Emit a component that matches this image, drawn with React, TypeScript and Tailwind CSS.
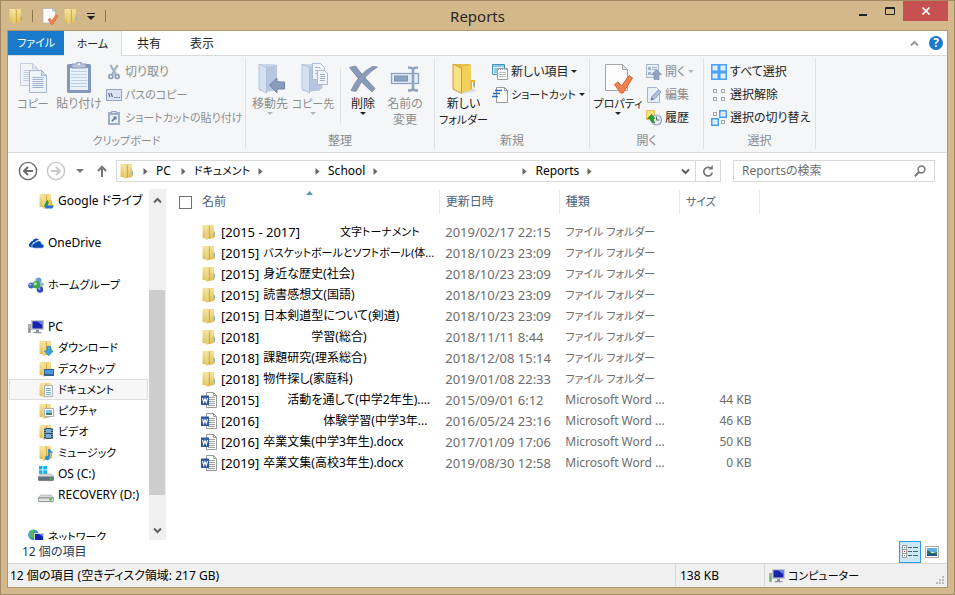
import type { ReactNode } from "react";

type Kids = { children?: ReactNode };

function textSize(text: string) {
  const kana = (text.match(/[\u30a1-\u30fc]/g) ?? []).length;
  return kana > text.length / 2 ? "text-[11px]" : "text-[12px]";
}

/* ---------- icons ---------- */

function Folder({ children }: Kids) {
  return (
    <svg width="16" height="16" viewBox="0 0 16 16" className="shrink-0" aria-hidden="true">
      <defs>
        <linearGradient id="fl" x1="0" y1="0" x2="0" y2="1">
          <stop offset="0" stopColor="#f6e59c" />
          <stop offset="1" stopColor="#dfc058" />
        </linearGradient>
        <linearGradient id="fr" x1="0" y1="0" x2="1" y2="1">
          <stop offset="0" stopColor="#f9ecb0" />
          <stop offset="1" stopColor="#dcb74a" />
        </linearGradient>
      </defs>
      <path d="M1.500 1H7v13.500l-5.500-.5z" fill="url(#fl)" />
      <path d="M6.500 1.500 8 1h4.800v13H7z" fill="#ecd27a" />
      <path d="M4.800 2.500 8.500 1.500 9 14.600 5.600 15.800 4.800 15z" fill="url(#fr)" />
      <path d="M9 1.800 12.800 1.200V14L8.600 15z" fill="url(#fl)" />
      <path d="M8.500 2v12.800" stroke="#c9a23c" strokeWidth=".7" />
      <path d="M12.300 7.500h1.500v5.500l-1.500 1z" fill="#cdb563" />
      <path d="M13 9h.8v2.500H13z" fill="#58b4ea" />
      {children}
    </svg>
  );
}

function WordIcon() {
  return (
    <svg width="16" height="16" viewBox="0 0 16 16" className="shrink-0" aria-hidden="true">
      <path d="M5.500.500h7l3 3v12h-10z" fill="#fff" stroke="#9a9a9a" />
      <path d="M12.500.500v3h3" fill="none" stroke="#9a9a9a" />
      <path d="M8 5.500h6M8 7.500h6M8 9.500h6M8 11.500h6M7 13.500h7" stroke="#a2a2a2" />
      <path d="M0 3.500h8v9.500H0z" fill="#2b579a" />
      <path d="m1.500 6 1.200 4.300L4 6.600l1.300 3.700L6.500 6" fill="none" stroke="#fff" strokeWidth="1.100" />
    </svg>
  );
}

function PcIcon() {
  return (
    <svg width="16" height="16" viewBox="0 0 16 16" className="shrink-0" aria-hidden="true">
      <path d="M0 5h3v9H0z" fill="#a9adb0" />
      <path d="M1 9h1v4H1z" fill="#55b04e" />
      <path d="M3 1h13v10H3z" fill="#c3c8cc" />
      <path d="M4.500 2.300h10v7.200h-10z" fill="#1823ae" />
      <path d="M9 2.300h5.500v4z" fill="#6f86ee" />
      <path d="M8 11h3v2h2.500v1.300h-8V13H8z" fill="#8f9498" />
    </svg>
  );
}

function DriveIcon({ system = false }: { system?: boolean }) {
  return (
    <svg width="16" height="16" viewBox="0 0 16 16" className="shrink-0" aria-hidden="true">
      {system && <path d="M1 0h3.500v3.500H1zM5.300 0H9v3.500H5.300zM1 4.300h3.500V8H1zM5.300 4.300H9V8H5.300z" fill="#14b4ee" />}
      <path d="M2.500 8h11l2.200 3H.300z" fill="#d6d9db" stroke="#a6aaad" strokeWidth=".6" />
      <path d="M.300 11h15.400v2.600q0 1-1 1H1.300q-1 0-1-1z" fill={system ? "#5d6f80" : "#e4e6e7"} stroke="#6c7175" strokeWidth=".8" />
      <path d="M11.500 11.500h2.300v2.100h-2.300z" fill="#41c23c" />
    </svg>
  );
}

function GoogleFolder() {
  return (
    <Folder>
      <path d="m9.300 7 2.700 0 3.700 6h-2.900z" fill="#f8c520" />
      <path d="m9.300 7 1.500 2.500L8.300 15 6 13z" fill="#149b58" />
      <path d="M8.300 12.500h7.500l-1.400 3H7z" fill="#2b6ee0" />
    </Folder>
  );
}

function OneDriveIcon() {
  return (
    <svg width="16" height="16" viewBox="0 0 17 16" className="shrink-0" aria-hidden="true">
      <path d="M4.500 12.500H2.600A2.400 2.400 0 0 1 2.400 8 3 3 0 0 1 5 5.500 4 4 0 0 1 12 5q-3-.5-4.500 2-3.700 0-3 5.500z" fill="#094ab2" />
      <path d="M6.500 13.500a2.400 2.400 0 0 1-.2-4.900q.8-2 2.700-1.800A3.100 3.100 0 0 1 14.500 9a2.200 2.200 0 0 1 .4 4.500z" fill="#094ab2" stroke="#fff" strokeWidth=".6" />
    </svg>
  );
}

function HomegroupIcon() {
  return (
    <svg width="16" height="16" viewBox="0 0 16 16" className="shrink-0" aria-hidden="true">
      <circle cx="10.500" cy="3.500" r="3" fill="#6e9fd6" />
      <circle cx="3.200" cy="8.500" r="3" fill="#3f63c4" />
      <circle cx="12" cy="12.500" r="3.200" fill="#3050b8" />
      <circle cx="13.500" cy="7.500" r="2.200" fill="#8eb8e4" />
      <circle cx="8.300" cy="7.800" r="3.800" fill="#3fa548" />
      <circle cx="7.400" cy="6.700" r="1.500" fill="#b5e5ac" />
      <circle cx="2.300" cy="7.500" r="1" fill="#b8cdf4" />
      <circle cx="11.200" cy="11.700" r="1.100" fill="#9db9f2" />
    </svg>
  );
}

function NetworkIcon() {
  return (
    <svg width="16" height="16" viewBox="0 0 16 16" className="shrink-0" aria-hidden="true">
      <circle cx="5.500" cy="5.800" r="5.300" fill="#2d8fd8" />
      <path d="M1 4q3-4 6-3L5 4l1 3-2 3-3-3z" fill="#58b956" />
      <path d="M6 4h10v8H6z" fill="#cfd6dc" />
      <path d="M7 5h8v6H7z" fill="#1522a8" />
      <path d="M11 5h4v3z" fill="#6c82ea" />
      <path d="M9 12h4v2H9z" fill="#8d9296" />
    </svg>
  );
}

function Sheet({ x, y }: { x: number; y: number }) {
  return (
    <g transform={`translate(${x} ${y})`}>
      <path d="M.500.500h12l5 5v17H.500z" fill="#eff4fb" stroke="#a3b5d2" />
      <path d="M12.500.500v5h5z" fill="#d5e0f0" stroke="#a3b5d2" />
      <path d="M3.500 7.500h11M3.500 9.500h11M3.500 11.500h11M3.500 13.500h11M3.500 15.500h11M3.500 17.500h11" stroke="#9db1d2" />
    </g>
  );
}

function CopyIcon() {
  return (
    <svg width="32" height="32" viewBox="0 0 32 32" aria-hidden="true">
      <g opacity=".6"><Sheet x={3} y={1} /></g>
      <Sheet x={12} y={8} />
    </svg>
  );
}

function PasteIcon() {
  return (
    <svg width="32" height="32" viewBox="0 0 32 32" aria-hidden="true">
      <rect x="4" y="2" width="24" height="29" rx="1.500" fill="#8398ba" />
      <path d="M7 6h18v22H7z" fill="#e9f1fa" />
      <path d="M8 9.500h16M8 12.500h16M8 15.500h16M8 18.500h16M8 21.500h16M8 24.500h16" stroke="#bccfe6" />
      <path d="M9 2h4q0-2 3-2t3 2h4v4H9z" fill="#b7c4d8" stroke="#8a9ab4" />
      <path d="M15 1.500h2v1.500h-2z" fill="#f4f6f8" />
    </svg>
  );
}

function BlueFolder({ children }: Kids) {
  return (
    <svg width="32" height="32" viewBox="0 0 32 32" aria-hidden="true">
      <path d="M5 2h14l4 1v26H5z" fill="#c9d7ea" />
      <path d="M12 5 23 3v25l-11 2z" fill="#b6c6de" />
      <path d="M5 2 12.500 5.500V31L5 27z" fill="#d5e1f1" stroke="#a8bad5" strokeWidth=".8" />
      <path d="M23 19h2.500v7L23 28z" fill="#bac9dd" />
      {children}
    </svg>
  );
}

function MoveToIcon() {
  return (
    <BlueFolder>
      <path d="m15.500 23 7.500-7v4h7.500v7H23v4z" fill="#8a9dbf" stroke="#6b82ab" />
    </BlueFolder>
  );
}

function CopyToIcon() {
  return (
    <BlueFolder>
      <path d="M15.500 1.500h8l4 4v12h-12z" fill="#f2f6fc" stroke="#a9bbd6" />
      <path d="M18 5.500h5M18 8.500h7M18 11.500h7" stroke="#9db1d2" />
      <path d="M20.500 8.500h7l3 3v11h-10z" fill="#f2f6fc" stroke="#a9bbd6" />
      <path d="M23 12.500h5M23 14.500h5M23 16.500h5M23 18.500h5" stroke="#9db1d2" />
    </BlueFolder>
  );
}

function DeleteIcon() {
  return (
    <svg width="32" height="32" viewBox="0 0 32 32" aria-hidden="true">
      <path d="M2.500 5.500 8.500 4Q15 13 28 26.500L25 30Q13 20 2.500 5.500z" fill="#8a9bb8" stroke="#7688a8" strokeWidth=".8" />
      <path d="M30.500 5Q17 13 9 29.500L4 28.500Q12 11 25.500 4.500z" fill="#8a9bb8" stroke="#7688a8" strokeWidth=".8" />
    </svg>
  );
}

function RenameIcon() {
  return (
    <svg width="32" height="32" viewBox="0 0 32 32" aria-hidden="true">
      <rect x="2.500" y="11.500" width="27" height="10" fill="#e4ecf7" stroke="#8ca2c4" strokeWidth="1.300" />
      <rect x="5.500" y="14" width="13" height="5" fill="#8ea2c3" stroke="#7b91b6" />
      <path d="M19 5.500q4 0 5 1.500 1-1.500 5-1.500M24 7v20m-5 1.500q4 0 5-1.500 1 1.500 5 1.500" fill="none" stroke="#8fa3c3" strokeWidth="2.600" />
    </svg>
  );
}

function NewFolderIcon() {
  return (
    <svg width="32" height="32" viewBox="0 0 32 32" aria-hidden="true">
      <path d="m14 29 12-2 3 2-15 3z" fill="#dadcdf" />
      <path d="M5 2h16l2 1v25H5z" fill="#e6bd44" />
      <path d="M13 5 23 3v25l-10 3z" fill="#f2d05a" />
      <path d="M5 2 13.500 6v25.500L5 27z" fill="#f9e283" stroke="#cf9c22" />
      <path d="M22.500 18H27v7l-4.500 3z" fill="#e2b43a" />
      <path d="M24 20h1.500v6L24 27z" fill="#fff" />
      <path d="M25.500 20.500h1v4h-1z" fill="#3e9de0" />
    </svg>
  );
}

function PropertiesIcon({ size = 32 }: { size?: number }) {
  return (
    <svg width={size} height={size} viewBox="0 0 32 32" aria-hidden="true" className="shrink-0">
      <path d="M3.500 2.500h17l5 5v21h-22z" fill="#fcfcfd" stroke="#a3a6aa" />
      <path d="M20.500 2.500v5h5z" fill="#e3e5e8" stroke="#a3a6aa" />
      <path d="m12.500 22.500 3.500-2.500 3.500 4L27 13.500l3.500 2.500L21 31h-2.500z" fill="#f0814f" stroke="#dd6230" />
    </svg>
  );
}

function CutIcon() {
  return (
    <svg width="16" height="16" viewBox="0 0 16 16" className="shrink-0" aria-hidden="true">
      <path d="M4.500 1 9.800 10.500M11.500 1 6.200 10.500" stroke="#a3b2c9" strokeWidth="2.200" />
      <circle cx="4.800" cy="12.500" r="2" fill="none" stroke="#8396b5" strokeWidth="1.500" />
      <circle cx="11.200" cy="12.500" r="2" fill="none" stroke="#8396b5" strokeWidth="1.500" />
    </svg>
  );
}

function CopyPathIcon() {
  return (
    <svg width="16" height="16" viewBox="0 0 16 16" className="shrink-0" aria-hidden="true">
      <rect x=".5" y="2.500" width="15" height="11" fill="#dce6f3" stroke="#8fa3c4" />
      <path d="m2.500 6 1.500 4m1-4 1.500 4M8 10.500h1.500m.8 0h1.400m.9 0H14" stroke="#596e94" strokeWidth="1.200" />
    </svg>
  );
}

function PasteShortcutIcon() {
  return (
    <svg width="16" height="16" viewBox="0 0 16 16" className="shrink-0" aria-hidden="true">
      <path d="M2 2h12v13H2z" fill="#9fb0ca" />
      <path d="M5.500 1.500h5v2h-5z" fill="#dbe3ee" stroke="#8fa1bf" />
      <path d="M4 5h8v8H4z" fill="#eef4fb" />
      <path d="M7 6.500h3.500V10L9.300 8.900 6.500 11.700 5.300 10.500 8.100 7.700z" fill="#5b739f" />
    </svg>
  );
}

function NewItemIcon() {
  return (
    <svg width="16" height="16" viewBox="0 0 16 16" className="shrink-0" aria-hidden="true">
      <path d="M.500.500h12v10H.500z" fill="#e2f2fa" stroke="#3f93bf" />
      <path d="M1 1h11v2H1z" fill="#8cc8e4" />
      <path d="M2 4h3v5H2z" fill="#94cce4" />
      <path d="M5.500 4.500h10v11h-10z" fill="#fff" stroke="#989da2" />
      <path d="M6 5.500h9" stroke="#9ea3a8" strokeDasharray="1 1" />
      <path d="M7 8.500h7M7 10.500h7M7 12.500h7" stroke="#c0c4c8" />
    </svg>
  );
}

function ShortcutIcon() {
  return (
    <svg width="16" height="16" viewBox="0 0 16 16" className="shrink-0" aria-hidden="true">
      <path d="M4.500.500h8l3 3v12h-11z" fill="#fff" stroke="#95999d" />
      <path d="M12.500.500v3h3" fill="none" stroke="#95999d" />
      <path d="M3 3.500h7M1 6.500h7M0 9.500h6" stroke="#1e6fc4" strokeWidth="1.300" />
    </svg>
  );
}

function OpenIcon() {
  return (
    <svg width="16" height="16" viewBox="0 0 16 16" className="shrink-0" aria-hidden="true">
      <path d="M.500.500h12v13H.500z" fill="#e6edf7" stroke="#a4b5d0" />
      <path d="M2 3h3v3H2zM2 8h3v3H2z" fill="#a4b5d0" />
      <path d="M6 3.500h5M6 5.500h5" stroke="#a4b5d0" />
      <path d="m10.500 5.500 5 5H13v5H8v-5H5.500z" fill="#8fa2c2" stroke="#7b90b4" strokeWidth=".7" />
    </svg>
  );
}

function EditIcon() {
  return (
    <svg width="16" height="16" viewBox="0 0 16 16" className="shrink-0" aria-hidden="true">
      <path d="M1.500.500h9l3 3v12h-12z" fill="#e9f0f9" stroke="#a4b5d0" />
      <path d="m5 13 1-3.500L12.500 3 15 5.200 8.500 12z" fill="#b4c3db" stroke="#8499bd" />
      <path d="m4.500 13.500 1.200-3.200 2 2z" fill="#637ba6" />
    </svg>
  );
}

function HistoryIcon() {
  return (
    <svg width="16" height="16" viewBox="0 0 16 16" className="shrink-0" aria-hidden="true">
      <path d="M.500.500h8v9h-8z" fill="#f8df7c" stroke="#dbb542" strokeWidth=".8" />
      <circle cx="10.500" cy="10" r="5" fill="#eef3f8" stroke="#93a3b4" strokeWidth="1.200" />
      <path d="M10.500 6.500V10h3" fill="none" stroke="#56697c" strokeWidth="1.200" />
      <path d="m1.500 8.500 4.200-4 3 4H7.200Q7 10.500 9 13 4.500 12.500 4 8.500z" fill="#24a52b" stroke="#148318" strokeWidth=".7" />
    </svg>
  );
}

const TILES = [
  [0, 0],
  [8, 0],
  [0, 8],
  [8, 8],
];

function SelectionIcon({ on }: { on: number[] }) {
  return (
    <svg width="16" height="16" viewBox="0 0 16 16" className="shrink-0" aria-hidden="true">
      {TILES.map(([x, y], i) =>
        on.includes(i) ? (
          <g key={i}>
            <rect x={x} y={y} width="8" height="8" fill="#4aa2f5" />
            <rect x={x + 2} y={y + 2} width="4" height="4" fill="#cfe8fd" stroke="#fff" strokeWidth=".8" />
          </g>
        ) : (
          <rect key={i} x={x + 2.5} y={y + 2.5} width="3" height="3" fill="#fff" stroke="#a2a5a8" />
        ),
      )}
    </svg>
  );
}

function Caret({ muted = false }: { muted?: boolean }) {
  return (
    <svg width="6" height="3" viewBox="0 0 6 3" className={`shrink-0 ${muted ? "text-[#b5b5b5]" : "text-[#222]"}`} aria-hidden="true">
      <path d="M0 0h6L3 3z" fill="currentColor" />
    </svg>
  );
}

function Chevron({ up = false, className = "text-[#606060]" }: { up?: boolean; className?: string }) {
  return (
    <svg width="9" height="7" viewBox="0 0 9 7" className={`shrink-0 ${className}`} aria-hidden="true">
      <path d={up ? "M1 5.500 4.500 2 8 5.500" : "M1 1.500 4.500 5 8 1.500"} fill="none" stroke="currentColor" strokeWidth="2" />
    </svg>
  );
}

function ArrowCircle({ back = false }: { back?: boolean }) {
  const c = back ? "#6a6a6a" : "#c8c8c8";
  return (
    <svg width="20" height="20" viewBox="0 0 20 20" aria-hidden="true">
      <circle cx="10" cy="10" r="8.600" fill="#fff" stroke={c} strokeWidth="1.400" />
      <path
        d={back ? "M15 10H6m4-4-4 4 4 4" : "M5 10h9m-4-4 4 4-4 4"}
        fill="none"
        stroke={c}
        strokeWidth="2"
      />
    </svg>
  );
}

/* ---------- ribbon ---------- */

function Group({ label, width, children }: { label: string; width: string; children: ReactNode }) {
  return (
    <section className={`flex shrink-0 flex-col border-r border-[#dfe1e3] ${width}`}>
      <div className="flex h-[75px] pt-0.5">{children}</div>
      <h2 className={`text-center leading-4 text-[#8a8c8e] ${textSize(label)}`}>{label}</h2>
    </section>
  );
}

function BigButton({
  icon,
  lines,
  width = "w-11",
  muted = false,
  caret = false,
}: {
  icon: ReactNode;
  lines: string[];
  width?: string;
  muted?: boolean;
  caret?: boolean;
}) {
  return (
    <button type="button" className={`flex shrink-0 flex-col items-center pt-0.5 ${width} ${muted ? "text-[#8d8d8d]" : "text-[#222]"}`}>
      {icon}
      <span className="mt-0.5 flex flex-col items-center leading-4">
        {lines.map((l) => (
          <span key={l} className={textSize(l)}>{l}</span>
        ))}
      </span>
      {caret && <Caret muted={muted} />}
    </button>
  );
}

function SmallButton({
  icon,
  label,
  muted = false,
  caret = false,
}: {
  icon: ReactNode;
  label: string;
  muted?: boolean;
  caret?: boolean;
}) {
  return (
    <button type="button" className={`flex h-[23px] items-center gap-[3px] ${muted ? "text-[#8d8d8d]" : "text-[#222]"}`}>
      {icon}
      <span className={textSize(label)}>{label}</span>
      {caret && <Caret muted={muted} />}
    </button>
  );
}

function Ribbon() {
  return (
    <div className="flex shrink-0 overflow-hidden border-b border-[#d9dbdd] bg-[#f4f6f8] pt-0.5 pb-[3px]">
      <Group label="クリップボード" width="w-[238px]">
        <BigButton icon={<CopyIcon />} lines={["コピー"]} width="w-[50px]" muted />
        <BigButton icon={<PasteIcon />} lines={["貼り付け"]} width="w-[42px]" muted />
        <div className="ml-1.5 flex flex-col">
          <SmallButton icon={<CutIcon />} label="切り取り" muted />
          <SmallButton icon={<CopyPathIcon />} label="パスのコピー" muted />
          <SmallButton icon={<PasteShortcutIcon />} label="ショートカットの貼り付け" muted />
        </div>
      </Group>
      <Group label="整理" width="w-[189px]">
        <BigButton icon={<MoveToIcon />} lines={["移動先"]} width="w-12" muted caret />
        <BigButton icon={<CopyToIcon />} lines={["コピー先"]} width="w-[38px]" muted caret />
        <div className="mt-2 ml-2 h-14 w-px bg-[#dfe1e3]" />
        <BigButton icon={<DeleteIcon />} lines={["削除"]} caret />
        <BigButton icon={<RenameIcon />} lines={["名前の", "変更"]} width="w-10" muted />
      </Group>
      <Group label="新規" width="w-[155px]">
        <BigButton icon={<NewFolderIcon />} lines={["新しい", "フォルダー"]} width="w-[57px]" />
        <div className="flex flex-col">
          <SmallButton icon={<NewItemIcon />} label="新しい項目" caret />
          <SmallButton icon={<ShortcutIcon />} label="ショートカット" caret />
        </div>
      </Group>
      <Group label="開く" width="w-[114px]">
        <BigButton icon={<PropertiesIcon />} lines={["プロパティ"]} width="w-[56px]" caret />
        <div className="flex flex-col">
          <SmallButton icon={<OpenIcon />} label="開く" muted caret />
          <SmallButton icon={<EditIcon />} label="編集" muted />
          <SmallButton icon={<HistoryIcon />} label="履歴" />
        </div>
      </Group>
      <Group label="選択" width="w-[112px]">
        <div className="ml-[7px] flex flex-col">
          <SmallButton icon={<SelectionIcon on={[0, 1, 2, 3]} />} label="すべて選択" />
          <SmallButton icon={<SelectionIcon on={[]} />} label="選択解除" />
          <SmallButton icon={<SelectionIcon on={[1, 2]} />} label="選択の切り替え" />
        </div>
      </Group>
    </div>
  );
}

/* ---------- title bar, tabs, address ---------- */

function TitleBar() {
  return (
    <header className="grid h-[29px] shrink-0 grid-cols-[1fr_auto_1fr]">
      <div className="flex items-center pl-px">
        <Folder />
        <span className="mx-2 h-3 w-px bg-[#8b7450]" />
        <button type="button" aria-label="プロパティ">
          <PropertiesIcon size={18} />
        </button>
        <button type="button" aria-label="新しいフォルダー" className="ml-1">
          <Folder />
        </button>
        <button type="button" aria-label="クイック アクセス ツール バーのカスタマイズ" className="ml-2">
          <svg width="8" height="8" viewBox="0 0 8 8" aria-hidden="true">
            <path d="M0 1.500h8" stroke="#222" strokeWidth="1" />
            <path d="M0 4h8L4 8z" fill="#222" />
          </svg>
        </button>
        <span className="ml-2.5 h-3 w-px bg-[#8b7450]" />
      </div>
      <h1 className="self-center text-[15px] leading-5 text-[#2b2620]">Reports</h1>
      <div className="flex items-start justify-end">
        <button type="button" aria-label="最小化" className="flex h-5 w-[27px] items-center justify-center">
          <svg width="8" height="12" viewBox="0 0 8 12" aria-hidden="true"><path d="M0 9h8v2H0z" fill="#222" /></svg>
        </button>
        <button type="button" aria-label="最大化" className="flex h-5 w-[27px] items-center justify-center">
          <svg width="10" height="8" viewBox="0 0 10 8" aria-hidden="true"><path d="M.500.500h9v7h-9zM.500 1.500h9" fill="none" stroke="#222" /></svg>
        </button>
        <button type="button" aria-label="閉じる" className="flex h-5 w-[45px] items-center justify-center bg-[#c75050]">
          <svg width="8" height="8" viewBox="0 0 8 8" aria-hidden="true"><path d="m.500.500 7 7m0-7-7 7" stroke="#fff" strokeWidth="1.700" /></svg>
        </button>
      </div>
    </header>
  );
}

function Tabs() {
  return (
    <div className="flex h-[25px] shrink-0 items-stretch border-b border-[#dadbdc] bg-white text-[#222]">
      <button type="button" className="w-14 bg-[#1979ca] text-[11px] text-white">ファイル</button>
      <div role="tablist" className="-mb-px flex">
        <button type="button" role="tab" aria-selected="true" className="w-[58px] border-r border-[#dadbdc] bg-[#f4f6f8] text-[11px]">ホーム</button>
        <button type="button" role="tab" aria-selected="false" className="w-[54px]">共有</button>
        <button type="button" role="tab" aria-selected="false" className="w-[52px]">表示</button>
      </div>
      <div className="ml-auto flex items-center gap-2.5 pr-1">
        <button type="button" aria-label="リボンの最小化"><Chevron up className="text-[#9a9a9a]" /></button>
        <button type="button" aria-label="ヘルプ" className="flex size-[14px] items-center justify-center rounded-full bg-[#1979ca] text-[12px] leading-none font-bold text-white">?</button>
      </div>
    </div>
  );
}

function Crumb({ children, after = "ml-2" }: { children?: string; after?: string }) {
  return (
    <>
      {children && <button type="button" className={`ml-2 ${textSize(children)}`}>{children}</button>}
      <svg width="5" height="7" viewBox="0 0 5 7" className={`shrink-0 ${after}`} aria-hidden="true">
        <path d="M.500 0 4.500 3.500.500 7z" fill="#666" />
      </svg>
    </>
  );
}

function AddressBar() {
  return (
    <div className="flex h-9 shrink-0 items-center pr-3 pl-2.5">
      <button type="button" aria-label="戻る"><ArrowCircle back /></button>
      <button type="button" aria-label="進む" className="ml-2"><ArrowCircle /></button>
      <button type="button" aria-label="最近表示した場所" className="ml-2.5">
        <svg width="8" height="4" viewBox="0 0 8 4" aria-hidden="true"><path d="M0 0h8L4 4z" fill="#777" /></svg>
      </button>
      <button type="button" aria-label="上へ" className="mr-2 ml-3">
        <svg width="12" height="12" viewBox="0 0 12 12" aria-hidden="true">
          <path d="M6 12V1.500M2 6l4-4.300L10 6" fill="none" stroke="#777" strokeWidth="2" />
        </svg>
      </button>
      <nav className="flex h-[22px] flex-1 items-center border border-[#d9d9d9] pl-0.5">
        <Folder />
        <Crumb />
        <Crumb after="ml-2.5">PC</Crumb>
        <Crumb>ドキュメント</Crumb>
        <Crumb after="ml-[52px]" />
        <Crumb>School</Crumb>
        <Crumb after="ml-36" />
        <Crumb>Reports</Crumb>
        <button type="button" aria-label="以前の場所" className="mr-[5px] ml-auto"><Chevron /></button>
        <button type="button" aria-label="最新の情報に更新" className="flex h-full w-[25px] items-center justify-center border-l border-[#d9d9d9]">
          <svg width="12" height="12" viewBox="0 0 12 12" aria-hidden="true">
            <path d="M9.500 4A4.300 4.300 0 1 0 10.300 7.500" fill="none" stroke="#777" strokeWidth="1.700" />
            <path d="M6.500 4.500h4.300V0z" fill="#777" />
          </svg>
        </button>
      </nav>
      <label className="ml-3 flex h-[22px] w-[202px] items-center border border-[#d9d9d9] pr-2 pl-2">
        <input
          type="search"
          aria-label="Reportsの検索"
          placeholder="Reportsの検索"
          className="min-w-0 flex-1 bg-transparent outline-none placeholder:text-[#6d6d6d]"
        />
        <svg width="12" height="12" viewBox="0 0 12 12" aria-hidden="true">
          <circle cx="7.500" cy="4.500" r="3.400" fill="none" stroke="#777" strokeWidth="1.500" />
          <path d="M5 7 .8 11.200" stroke="#777" strokeWidth="2" />
        </svg>
      </label>
    </div>
  );
}

/* ---------- navigation pane ---------- */

const PLACES: { label: string; icon: ReactNode; top?: boolean; selected?: boolean }[] = [
  { label: "Google ドライブ", icon: <GoogleFolder /> },
  { label: "OneDrive", icon: <OneDriveIcon />, top: true },
  { label: "ホームグループ", icon: <HomegroupIcon />, top: true },
  { label: "PC", icon: <PcIcon />, top: true },
  { label: "ダウンロード", icon: <Folder><path d="M9 6.500h3.500V11H15l-4.200 4.700L6.600 11H9z" fill="#35a8e6" stroke="#1c7cb8" strokeWidth=".7" /></Folder> },
  { label: "デスクトップ", icon: <Folder><path d="M6 8h10v7H6z" fill="#375f8e" /><path d="M7 9h8v4H7z" fill="#4c9ade" /></Folder> },
  { label: "ドキュメント", icon: <Folder><path d="M6.500 3.500h8v11h-8z" fill="#fff" stroke="#a9aeb3" /><path d="M8 6.500h5M8 8.500h5M8 10.500h5M8 12.500h5" stroke="#7aa8d4" /></Folder>, selected: true },
  { label: "ピクチャ", icon: <Folder><path d="M6.500 5.500h9v8h-9z" fill="#fff" stroke="#a9aeb3" /><path d="M8 7h6v3H8z" fill="#7fc1ec" /><path d="M8 10h6v2H8z" fill="#3b8765" /></Folder> },
  { label: "ビデオ", icon: <Folder><path d="M6 4h9v11H6z" fill="#3c4650" /><path d="M8 5h5v4H8zM8 10h5v4H8z" fill="#6fb0dd" /><path d="M7 4v11M14 4v11" stroke="#dfe3e6" strokeDasharray="1 1" /></Folder> },
  { label: "ミュージック", icon: <Folder><path d="M11 4v8.500M11 4q1 3 3.500 4" fill="none" stroke="#2a8fd6" strokeWidth="1.800" /><circle cx="9.300" cy="13" r="2.300" fill="#2a8fd6" /></Folder> },
  { label: "OS (C:)", icon: <DriveIcon system /> },
  { label: "RECOVERY (D:)", icon: <DriveIcon /> },
  { label: "ネットワーク", icon: <NetworkIcon />, top: true },
];

function NavigationPane() {
  return (
    <aside className="flex w-[158px] shrink-0 border-r border-[#f0f0f0]">
      <ul className="min-w-0 flex-1 overflow-hidden pt-px pl-px">
        {PLACES.map((p) => (
          <li key={p.label} className={p.top ? "pt-[21px]" : ""}>
            <a
              href="#"
              className={`flex h-[21px] items-center gap-1 border ${textSize(p.label)} ${p.top ? "pl-[18px]" : "pl-7"} ${
                p.selected ? "border-[#dedede] bg-[#f7f7f7]" : "border-transparent"
              }`}
            >
              {p.icon}
              {p.label}
            </a>
          </li>
        ))}
      </ul>
      <div className="ml-px flex w-4 shrink-0 flex-col items-center bg-[#f0f0f0] py-1.5 pt-2">
        <Chevron up />
        <div className="mt-[86px] w-full flex-1 bg-[#cdcdcd]" />
        <Chevron className="mt-8 text-[#606060]" />
      </div>
    </aside>
  );
}

/* ---------- file list ---------- */

type Row = { prefix: string; name: string; gap?: string; date: string; size?: string };

const ROWS: Row[] = [
  { prefix: "[2015 - 2017]", gap: "ml-10", name: "文字トーナメント", date: "2019/02/17 22:15" },
  { prefix: "[2015]", name: "バスケットボールとソフトボール(体...", date: "2018/10/23 23:09" },
  { prefix: "[2015]", name: "身近な歴史(社会)", date: "2018/10/23 23:09" },
  { prefix: "[2015]", name: "読書感想文(国語)", date: "2018/10/23 23:09" },
  { prefix: "[2015]", name: "日本剣道型について(剣道)", date: "2018/10/23 23:09" },
  { prefix: "[2018]", gap: "ml-[52px]", name: "学習(総合)", date: "2018/11/11 8:44" },
  { prefix: "[2018]", name: "課題研究(理系総合)", date: "2018/12/08 15:14" },
  { prefix: "[2018]", name: "物件探し(家庭科)", date: "2019/01/08 22:33" },
  { prefix: "[2015]", gap: "ml-7", name: "活動を通して(中学2年生)....", date: "2015/09/01 6:12", size: "44 KB" },
  { prefix: "[2016]", gap: "ml-16", name: "体験学習(中学3年...", date: "2016/05/24 23:16", size: "46 KB" },
  { prefix: "[2016]", name: "卒業文集(中学3年生).docx", date: "2017/01/09 17:06", size: "50 KB" },
  { prefix: "[2019]", name: "卒業文集(高校3年生).docx", date: "2019/08/30 12:58", size: "0 KB" },
];

const HEAD = "border-r border-[#e3ecf5] p-0 pl-1.5 text-left font-normal";

function FileList() {
  return (
    <main className="relative min-w-0 flex-1 pt-px">
      <svg width="7" height="4" viewBox="0 0 7 4" className="absolute top-0.5 left-[140px]" aria-hidden="true">
        <path d="M0 4h7L3.500 0z" fill="#5c93b8" />
      </svg>
      <table className="w-[594px] table-fixed border-collapse whitespace-nowrap">
        <thead>
          <tr className="h-6 text-[#4c607a]">
            <th className="w-[273px] border-r border-[#e3ecf5] p-0 pl-[13px] text-left font-normal">
              <span className="flex items-center gap-2.5">
                <input type="checkbox" aria-label="すべて選択" className="size-[13px] appearance-none border border-[#707070] bg-white" />
                名前
              </span>
            </th>
            <th className={`w-[120px] ${HEAD}`}>更新日時</th>
            <th className={`w-[120px] ${HEAD}`}>種類</th>
            <th className={`w-[80px] text-[11px] ${HEAD}`}>サイズ</th>
          </tr>
        </thead>
        <tbody>
          <tr className="h-[7px]" aria-hidden="true" />
          {ROWS.map((r) => {
            const kind = r.size ? "Microsoft Word ..." : "ファイル フォルダー";
            return (
              <tr key={r.prefix + r.name} className="h-[21px] text-[#6d6d6d]">
                <td className="p-0 pl-[35px] text-black">
                  <span className="flex items-center">
                    {r.size ? <WordIcon /> : <Folder />}
                    <span className="ml-1 text-[13px]">{r.prefix}</span>
                    <span className={`${r.gap ?? "ml-1"} ${textSize(r.name)}`}>{r.name}</span>
                  </span>
                </td>
                <td className="p-0 pl-1.5 text-[13px]">{r.date}</td>
                <td className={`p-0 pl-1.5 ${textSize(kind)}`}>{kind}</td>
                <td className="p-0 pr-2 text-right">{r.size}</td>
              </tr>
            );
          })}
        </tbody>
      </table>
    </main>
  );
}

/* ---------- bottom bars ---------- */

function DetailsBar() {
  return (
    <div className="flex h-[23px] shrink-0 items-center pr-1 pl-3.5 text-[#1e395b]">
      <span>12 個の項目</span>
      <div className="ml-auto flex items-center">
        <button type="button" aria-label="詳細" className="flex size-[22px] items-center justify-center border border-[#26a0da] bg-[#cbe8f6]">
          <svg width="16" height="13" viewBox="0 0 16 13" aria-hidden="true">
            <path d="M.500.500h4v12h-4zM.500 4.500h4M.500 8.500h4" fill="#fff" stroke="#999" />
            <path d="M2 2h1v1H2zM2 10h1v1H2z" fill="#3a6ea5" />
            <path d="M2 6h1v1H2z" fill="#d22" />
            <path d="M6 2.500h4M11 2.500h5M6 6.500h4M11 6.500h5M6 10.500h4M11 10.500h5" stroke="#4a6572" />
          </svg>
        </button>
        <button type="button" aria-label="大アイコン" className="flex size-[22px] items-center justify-center">
          <svg width="14" height="12" viewBox="0 0 14 12" aria-hidden="true">
            <path d="M.500.500h13v11H.500z" fill="#fff" stroke="#aaa" />
            <path d="M2 2h10v4H2z" fill="#63b1df" />
            <path d="m2 4 5 3 5-1v3H2z" fill="#257056" />
            <path d="M2 8.500h10V10H2z" fill="#204e90" />
          </svg>
        </button>
      </div>
    </div>
  );
}

function StatusBar() {
  return (
    <footer className="flex h-6 shrink-0 items-stretch border-t border-[#d7d7d7] bg-[#f0f0f0] text-black">
      <span className="flex flex-1 items-center pl-0.5">12 個の項目 (空きディスク領域: 217 GB)</span>
      <span className="flex w-[89px] items-center border-l border-[#d7d7d7] pl-1">138 KB</span>
      <span className="flex w-[183px] items-center gap-[3px] border-l border-[#d7d7d7] pl-1">
        <PcIcon />
        <span className="text-[11px]">コンピューター</span>
        <svg width="9" height="9" viewBox="0 0 9 9" className="mr-0.5 mb-0.5 ml-auto self-end" aria-hidden="true">
          <path d="M6 0h2v2H6zM3 3h2v2H3zM6 3h2v2H6zM0 6h2v2H0zM3 6h2v2H3zM6 6h2v2H6z" fill="#bcbcbc" />
        </svg>
      </span>
    </footer>
  );
}

export default function App() {
  return (
    <div className="flex h-screen w-full flex-col border border-[#a38a65] bg-[#d3b88c] px-1.5 pb-1.5 font-['Noto_Sans','Noto_Sans_CJK_JP',sans-serif] text-[12px] leading-4 whitespace-nowrap text-black [font-feature-settings:'palt']">
      <TitleBar />
      <div className="flex min-h-0 flex-1 flex-col border border-[#b0966c] bg-white">
        <Tabs />
        <Ribbon />
        <AddressBar />
        <div className="flex min-h-0 flex-1">
          <NavigationPane />
          <FileList />
        </div>
        <DetailsBar />
        <StatusBar />
      </div>
    </div>
  );
}
